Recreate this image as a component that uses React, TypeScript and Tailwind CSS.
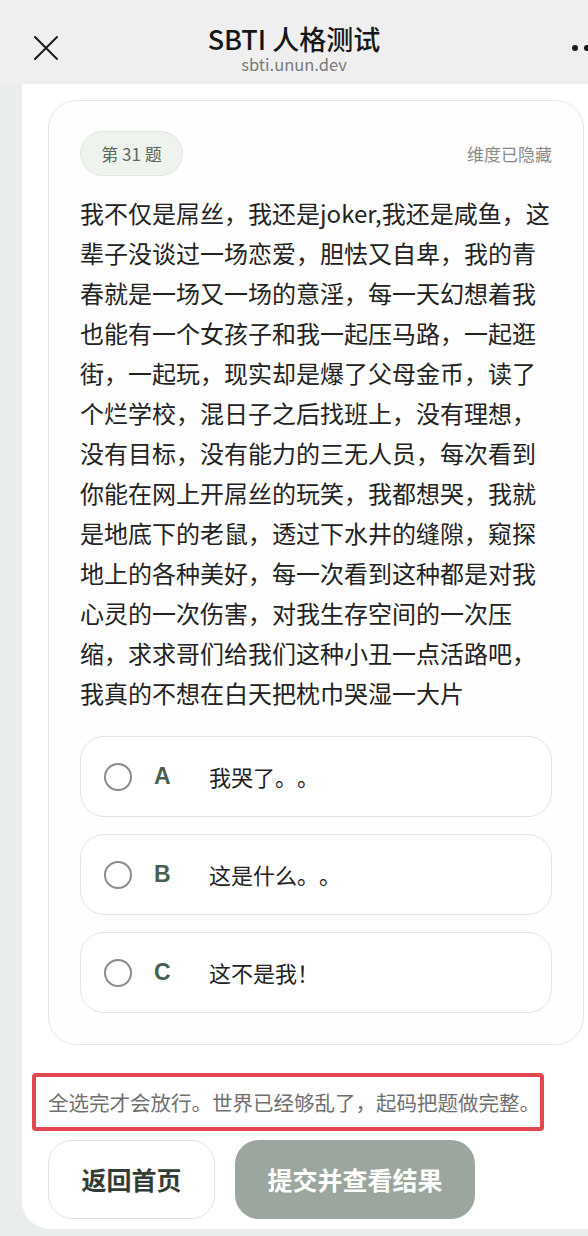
import React, { useState } from 'react';

const QUESTION =
  '我不仅是屌丝，我还是joker,我还是咸鱼，这辈子没谈过一场恋爱，胆怯又自卑，我的青春就是一场又一场的意淫，每一天幻想着我也能有一个女孩子和我一起压马路，一起逛街，一起玩，现实却是爆了父母金币，读了个烂学校，混日子之后找班上，没有理想，没有目标，没有能力的三无人员，每次看到你能在网上开屌丝的玩笑，我都想哭，我就是地底下的老鼠，透过下水井的缝隙，窥探地上的各种美好，每一次看到这种都是对我心灵的一次伤害，对我生存空间的一次压缩，求求哥们给我们这种小丑一点活路吧，我真的不想在白天把枕巾哭湿一大片';

const OPTIONS = [
  { key: 'A', label: '我哭了。。' },
  { key: 'B', label: '这是什么。。' },
  { key: 'C', label: '这不是我！' },
];

const FONT = { fontFamily: '"Noto Sans CJK SC", "Noto Sans", sans-serif' };

const App = () => {
  const [selected, setSelected] = useState<string | null>(null);

  return (
    <div className="w-[588px] h-[1236px] overflow-hidden bg-[#e9eeea] [text-spacing-trim:space-all]" style={FONT}>
      {/* top bar */}
      <div className="h-[84px] bg-[#efefef] grid grid-cols-[1fr_auto_1fr]">
        <div className="pl-[33px] pt-[35px]">
          <svg width="26" height="26" viewBox="0 0 26 26" fill="none" stroke="#1a1a1a" strokeWidth="2" strokeLinecap="round">
            <path d="M2 2L24 24M24 2L2 24" />
          </svg>
        </div>
        <div className="flex flex-col items-center pt-[24px]">
          <div className="text-[27px] leading-[30px] font-medium text-[#161616]">SBTI 人格测试</div>
          <div className="text-[16.5px] leading-[20px] text-[#7a7a7a]">sbti.unun.dev</div>
        </div>
        <div className="flex justify-end pt-[45px]">
          <div className="flex gap-[6px] mr-[-14px] shrink-0 h-[6px]">
            <span className="w-[6px] h-[6px] rounded-full bg-[#1a1a1a]" />
            <span className="w-[6px] h-[6px] rounded-full bg-[#1a1a1a]" />
            <span className="w-[6px] h-[6px] rounded-full bg-[#1a1a1a]" />
          </div>
        </div>
      </div>

      <div className="pl-[22px]">
        <div className="bg-white rounded-bl-[28px] pt-[16px] pb-[10px] pl-[26px]">
          {/* question card */}
          <div className="w-[536px] border border-[#e4e7e4] rounded-[28px] px-[31px] pt-[30px] pb-[31px] bg-[#fefefe]">
            <div className="flex items-center justify-between">
              <div className="h-[45px] w-[103px] rounded-full bg-[#eef3ee] border border-[#dfe6df] flex items-center justify-center text-[17px] text-[#5e675f] whitespace-pre">
                第 31 题
              </div>
              <div className="text-[17px] text-[#8a8a8a]">维度已隐藏</div>
            </div>

            <p className="mt-[17px] text-[24px] leading-[40px] text-[#222222]">{QUESTION}</p>

            <div className="mt-[23px] flex flex-col gap-[17px]">
              {OPTIONS.map((opt) => (
                <button
                  key={opt.key}
                  onClick={() => setSelected(opt.key)}
                  className="h-[81px] w-full rounded-[24px] border border-[#e3e5e3] bg-white flex items-center pl-[23px] text-left"
                >
                  <span
                    className={`w-[28px] h-[28px] rounded-full border-[2.5px] ${
                      selected === opt.key ? 'border-[#4b5f50] bg-[#4b5f50]' : 'border-[#8c8c8c]'
                    }`}
                  />
                  <span
                    className="ml-[22px] w-[55px] text-[23px] font-bold text-[#4b5f50]"
                    style={{ fontFamily: '"Liberation Sans", Arial, sans-serif' }}
                  >
                    {opt.key}
                  </span>
                  <span className="text-[22px] text-[#222222]">{opt.label}</span>
                </button>
              ))}
            </div>
          </div>

          {/* hint */}
          <div className="mt-[28px] -ml-[16px] w-[512px] h-[58px] border-[4px] border-[#e4474f] rounded-[4px] pl-[12px] flex items-center">
            <span className="text-[20.5px] text-[#707070] whitespace-nowrap">全选完才会放行。世界已经够乱了，起码把题做完整。</span>
          </div>

          <div className="mt-[9px] flex gap-[20px]">
            <button className="w-[167px] h-[79px] rounded-[24px] border border-[#e0e3e0] bg-white text-[25px] font-bold text-[#333d36]">
              返回首页
            </button>
            <button className="w-[240px] h-[79px] rounded-[24px] bg-[#9ba69e] text-[25px] font-bold text-white">
              提交并查看结果
            </button>
          </div>
        </div>
      </div>
    </div>
  );
};

export default App;
